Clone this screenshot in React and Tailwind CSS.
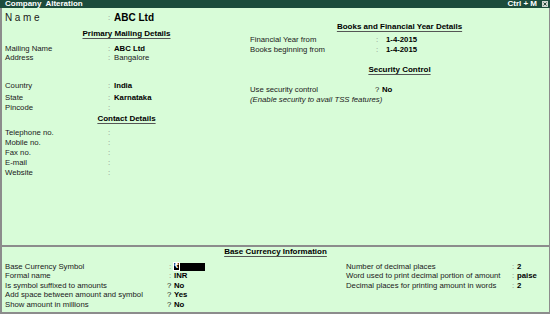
import React from "react";

const F = { fontFamily: '"Liberation Sans", Arial, "DejaVu Sans", sans-serif' };

function Row({ label, lw, sep = ":", sw, value, bold = true, h = "h-[10px]", italic }) {
  return (
    <div className={`flex items-center ${h} leading-none whitespace-nowrap`}>
      <span className={`${lw} shrink-0 text-[#1a1a1a] ${italic ? "italic" : ""}`}>{label}</span>
      {sep !== null && (
        <span className={`${sw} shrink-0 ${sep === ":" ? "text-[#8a8a8a]" : "text-[#1a1a1a]"}`}>{sep}</span>
      )}
      {value && <span className={bold ? "font-bold text-black" : "text-[#1a1a1a]"}>{value}</span>}
    </div>
  );
}

function Heading({ children, h = "h-[10px]" }) {
  return (
    <div className={`flex ${h} items-center justify-center leading-none`}>
      <span className="text-[8px] font-bold text-black underline decoration-[#555] decoration-1 underline-offset-[2px]">
        {children}
      </span>
    </div>
  );
}

export default function App() {
  return (
    <div style={F} className="w-[550px] h-[314px] overflow-hidden bg-[#d8fcd8] flex flex-col text-[7.75px]">
      {/* title bar */}
      <div className="h-[8px] bg-[#1c4c3c] flex items-center justify-between pl-[5px] pr-[2px] text-white font-bold text-[8px] leading-none">
        <span className="[word-spacing:2px]">Company Alteration</span>
        <div className="flex items-center gap-[5px]">
          <span>Ctrl + M</span>
          <svg width="6" height="6" viewBox="0 0 6 6" className="block">
            <rect x="0" y="0" width="6" height="6" fill="#d0d8d0" />
            <path d="M1.5 1.5 L4.5 4.5 M4.5 1.5 L1.5 4.5" stroke="#2a4a3a" strokeWidth="1" />
          </svg>
        </div>
      </div>

      <div className="flex-1 flex flex-col border-l-2 border-r border-b-2 border-[#8c8c8c]">
        {/* top area */}
        <div className="h-[237px] flex">
          {/* left column */}
          <div className="w-[246px] flex flex-col pl-[3px]">
            <div className="mt-[3px] h-[14px] flex items-center leading-none whitespace-nowrap">
              <span className="w-[103px] text-[10px] tracking-[2.6px] text-[#1a1a1a]">Name</span>
              <span className="w-[6px] text-[#8a8a8a]">:</span>
              <span className="text-[10px] font-bold text-black">ABC Ltd</span>
            </div>
            <div className="mt-[4px]"><Heading>Primary Mailing Details</Heading></div>
            <div className="mt-[5px]">
              <Row label="Mailing Name" lw="w-[103px]" sw="w-[6px]" value="ABC Ltd" h="h-[9px]" />
              <Row label="Address" lw="w-[103px]" sw="w-[6px]" value="Bangalore" bold={false} h="h-[9px]" />
            </div>
            <div className="mt-[18px]">
              <Row label="Country" lw="w-[103px]" sw="w-[6px]" value="India" h="h-[12px]" />
              <Row label="State" lw="w-[103px]" sw="w-[6px]" value="Karnataka" h="h-[11px]" />
              <Row label="Pincode" lw="w-[103px]" sw="w-[6px]" h="h-[10px]" />
            </div>
            <div className="mt-[1px]"><Heading>Contact Details</Heading></div>
            <div className="mt-[4px]">
              <Row label="Telephone no." lw="w-[103px]" sw="w-[6px]" />
              <Row label="Mobile no." lw="w-[103px]" sw="w-[6px]" />
              <Row label="Fax no." lw="w-[103px]" sw="w-[6px]" />
              <Row label="E-mail" lw="w-[103px]" sw="w-[6px]" />
              <Row label="Website" lw="w-[103px]" sw="w-[6px]" />
            </div>
          </div>
          {/* right column */}
          <div className="flex-1 flex flex-col pl-[2px]">
            <div className="mt-[14px]"><Heading>Books and Financial Year Details</Heading></div>
            <div className="mt-[3px]">
              <Row label="Financial Year from" lw="w-[126px]" sw="w-[10px]" value="1-4-2015" />
              <Row label="Books beginning from" lw="w-[126px]" sw="w-[10px]" value="1-4-2015" />
            </div>
            <div className="mt-[10px]"><Heading>Security Control</Heading></div>
            <div className="mt-[10px]">
              <Row label="Use security control" lw="w-[125px]" sep="?" sw="w-[7px]" value="No" />
              <Row label="(Enable security to avail TSS features)" lw="w-auto" sep={null} italic />
            </div>
          </div>
        </div>

        {/* separator */}
        <div className="h-[2px] bg-[#8c8c8c] mr-[-1px]" />

        {/* bottom area */}
        <div className="flex-1 flex flex-col">
          <Heading>Base Currency Information</Heading>
          <div className="mt-[5px] flex">
            <div className="w-[344px] pl-[3px] flex flex-col">
              <div className="flex items-center h-[9.5px] leading-none whitespace-nowrap">
                <span className="w-[164px] text-[#1a1a1a]">Base Currency Symbol</span>
                <span className="w-[4px] text-[#8a8a8a]">:</span>
                <span className="w-[32px] h-[8px] bg-black text-white flex items-center pl-[1px] text-[7px] font-bold" style={{ fontFamily: '"DejaVu Sans", "Liberation Sans", sans-serif' }}>
                  <span className="outline outline-1 outline-white">₹</span>
                </span>
              </div>
              <Row label="Formal name" lw="w-[164px]" sw="w-[5px]" value="INR" h="h-[9.5px]" />
              <Row label="Is symbol suffixed to amounts" lw="w-[162px]" sep="?" sw="w-[7px]" value="No" h="h-[9.5px]" />
              <Row label="Add space between amount and symbol" lw="w-[162px]" sep="?" sw="w-[7px]" value="Yes" h="h-[9.5px]" />
              <Row label="Show amount in millions" lw="w-[162px]" sep="?" sw="w-[7px]" value="No" h="h-[9.5px]" />
            </div>
            <div className="flex-1 flex flex-col">
              <Row label="Number of decimal places" lw="w-[166px]" sw="w-[5px]" value="2" h="h-[9.5px]" />
              <Row label="Word used to print decimal portion of amount" lw="w-[166px]" sw="w-[5px]" value="paise" h="h-[9.5px]" />
              <Row label="Decimal places for printing amount in words" lw="w-[166px]" sw="w-[5px]" value="2" h="h-[9.5px]" />
            </div>
          </div>
        </div>
      </div>
    </div>
  );
}
